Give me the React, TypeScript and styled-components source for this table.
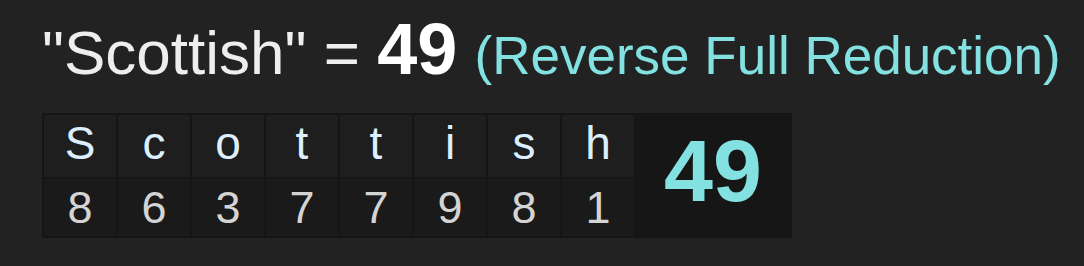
import styled, { createGlobalStyle } from "styled-components";

const GlobalStyle = createGlobalStyle`
  body {
    margin: 0;
    background: #222222;
    font-family: "Liberation Sans", Arial, sans-serif;
  }
`;

const Page = styled.div`
  padding: 18px 42px 0 42px;
`;

const Heading = styled.h1`
  margin: 0 0 26px 0;
  font-size: 62px;
  font-weight: normal;
  line-height: 62px;
  color: #eeeeee;
  white-space: nowrap;
`;

const Value = styled.b`
  color: #ffffff;
  font-size: 72px;
`;

const Cipher = styled.span`
  color: #83e1e1;
  font-size: 53px;
`;

const Table = styled.div`
  display: inline-grid;
  grid-template-columns: repeat(8, 72px) 154px;
  grid-template-rows: 62px 57px;
  gap: 2px;
  padding: 2px;
  background: #151515;
`;

const Cell = styled.div<{ $bottom?: boolean }>`
  display: flex;
  align-items: center;
  justify-content: center;
  padding-bottom: ${p => (p.$bottom ? "0" : "6px")};
  background: ${p => (p.$bottom ? "#1a1a1a" : "#1e1e1e")};
  color: ${p => (p.$bottom ? "#d4d4d4" : "#dcefff")};
  font-size: ${p => (p.$bottom ? "45px" : "46px")};
`;

const Total = styled.div`
  grid-column: 9;
  grid-row: 1 / span 2;
  display: flex;
  align-items: center;
  justify-content: center;
  padding-bottom: 9px;
  background: #161616;
  color: #83e1e1;
  font-size: 88px;
  font-weight: bold;
`;

const word = "Scottish";
const values = [8, 6, 3, 7, 7, 9, 8, 1];

export default function App() {
  const total = values.reduce((a, b) => a + b, 0);
  return (
    <Page>
      <GlobalStyle />
      <Heading>
        "{word}" = <Value>{total}</Value> <Cipher>(Reverse Full Reduction)</Cipher>
      </Heading>
      <Table>
        {word.split("").map((ch, i) => (
          <Cell key={"l" + i} style={{ gridColumn: i + 1, gridRow: 1 }}>{ch}</Cell>
        ))}
        {values.map((v, i) => (
          <Cell key={"v" + i} $bottom style={{ gridColumn: i + 1, gridRow: 2 }}>{v}</Cell>
        ))}
        <Total>{total}</Total>
      </Table>
    </Page>
  );
}
